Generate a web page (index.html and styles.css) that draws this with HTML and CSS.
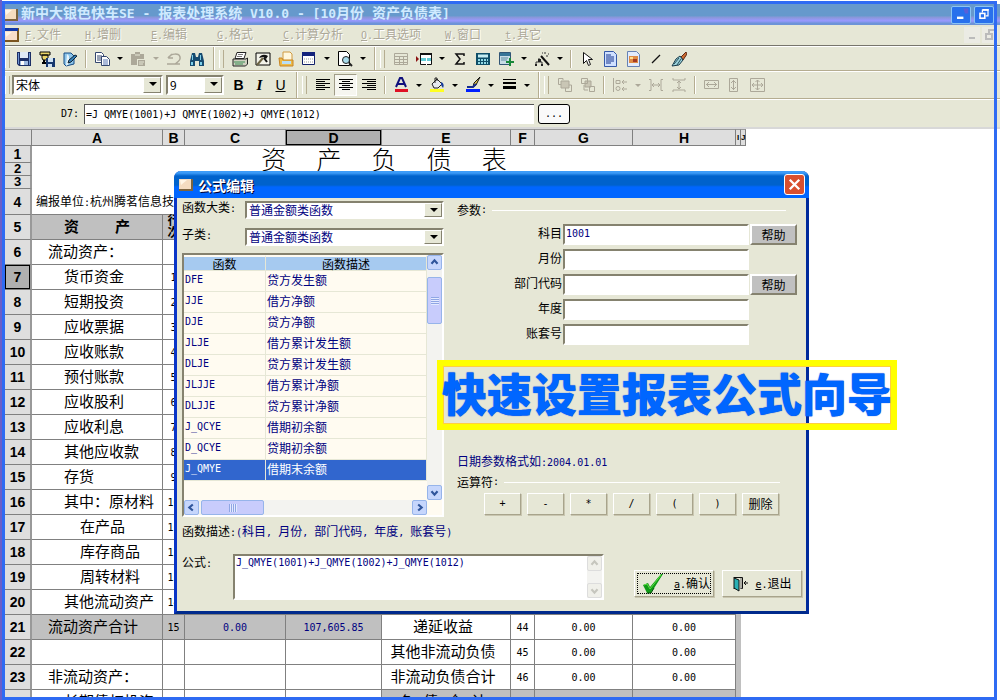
FILE: index.html
```html
<!DOCTYPE html>
<html lang="zh-CN">
<head>
<meta charset="utf-8">
<title>新中大银色快车SE - 报表处理系统</title>
<link rel="stylesheet" href="styles.css">
</head>
<body>
<div class="app">
  <header class="titlebar">
    <svg class="app-icon" viewBox="0 0 16 16"><rect x="1" y="2" width="14" height="12" fill="#7b6440"/><rect x="1" y="2" width="12" height="10" fill="#f4dcc0"/><path d="M2 3h7l-6 5z" fill="#fff6e6"/></svg>
    <h1>新中大银色快车<span class="l">SE - </span>报表处理系统<span class="l"> V10.0 - [10</span>月份<span class="l"> </span>资产负债表<span class="l">]</span></h1>
    <div class="win-buttons">
      <button class="win-btn" aria-label="最小化"><svg viewBox="0 0 20 20"><path d="M13 2h6v6h-4z" fill="#5a5fd8"/><rect x="5" y="12" width="8" height="3" fill="#fff"/></svg></button>
      <button class="win-btn" aria-label="还原"><svg viewBox="0 0 20 20" fill="none" stroke="#fff"><path d="M8 7V4h7v7h-3" stroke-width="1.5"/><path d="M8 3.500h8" stroke-width="2"/><rect x="5" y="8" width="6" height="6" stroke-width="2"/></svg></button>
    </div>
  </header>
  <nav class="menubar">
    <svg class="app-icon" viewBox="0 0 16 16"><rect x="0" y="1" width="15" height="14" fill="#7b5520"/><rect x="0" y="3" width="13" height="10" fill="#f8dccb"/><path d="M0 1h14v3H0z" fill="#1238a8"/><path d="M1 5h7l-6 5z" fill="#fff3e6"/></svg>
    <ul class="menus">
      <li><u class="l">F</u><span class="l">.</span>文件</li><li><u class="l">H</u><span class="l">.</span>增删</li><li><u class="l">E</u><span class="l">.</span>编辑</li><li><u class="l">G</u><span class="l">.</span>格式</li><li><u class="l">C</u><span class="l">.</span>计算分析</li><li><u class="l">O</u><span class="l">.</span>工具选项</li><li><u class="l">W</u><span class="l">.</span>窗口</li><li><u class="l">t</u><span class="l">.</span>其它</li>
    </ul>
    <div class="mdi-buttons">
      <svg viewBox="0 0 16 16"><rect x="5" y="10" width="6" height="2" fill="#bbb"/></svg>
      <svg viewBox="0 0 16 16" fill="none" stroke="#bbb" stroke-width="2"><path d="M7 6V3h7v6h-2M4 7h6v5H4z"/></svg>
    </div>
  </nav>

  <div class="toolbar">
    <div class="band">
      <button class="tool" aria-label="保存"><svg viewBox="0 0 16 16"><path d="M1 1h14v14H3l-2-2z" fill="#1c2f66"/><path d="M4 1h8v6H4z" fill="#dfe9f5"/><path d="M2 2h1v11H2zM13 2h1v12h-1z" fill="#6c93d0"/><path d="M4 10h8v4H4z" fill="#9db9e0"/><path d="M5 10h3v4H5z" fill="#fff"/></svg></button>
      <button class="tool" aria-label="另存"><svg viewBox="0 0 16 16"><path d="M1 1h10v3H1zM3 4h6v3l-1 2H4L3 7z" fill="#e8d46a" stroke="#000"/><path d="M3 12h5M5 9v3" stroke="#000" stroke-width="2"/><path d="M7 7h9v9H7z" fill="#17386f"/><path d="M9 7h5v4H9zM9 13h4v3H9z" fill="#cfe2f4"/></svg></button>
      <button class="tool" aria-label="属性"><svg viewBox="0 0 16 16"><path d="M2 2h7l3 3v8l-8 2-2-2z" fill="#8dc5ea" stroke="#174c84"/><path d="M5 3l2 2v8l-3 2z" fill="#e6f4fb"/><path d="M15 5l-6 6-3 1 1-3 6-5z" fill="#3482ba" stroke="#123"/></svg></button>
      <span class="sep"></span>
      <button class="tool" aria-label="复制"><svg viewBox="0 0 16 16" fill="#fff" stroke="#33466f"><path d="M1.500 1.500h6l2 2v8h-8z"/><path d="M3 5h5M3 7h5M3 9h5"/><path d="M7.500 5.500h5l3 3v6h-8z"/><path d="M9 9h5M9 11h5M9 13h5" stroke="#5575b5"/></svg></button>
      <button class="drop" aria-label="复制选项"></button>
      <button class="tool" aria-label="粘贴"><svg viewBox="0 0 16 16" fill="#aca899"><path d="M1 3h4V1h5v2h4v5H7v6H1z"/><path d="M8 9h7v6H8z"/><path d="M5 4h5M9 11h5M9 13h4" stroke="#e6e7d6"/></svg></button>
      <button class="drop off" aria-label="粘贴选项"></button>
      <button class="tool" aria-label="撤销"><svg viewBox="0 0 16 16" fill="none" stroke="#aca899" stroke-width="1.500"><path d="M2 7l4-4M2 7h5M2 7c3-5 11-5 12-1s-3 5-5 7M1 13h13"/></svg></button>
      <button class="tool" aria-label="查找"><svg viewBox="0 0 16 16"><path d="M3 2h3l1 4h2l1-4h3l2 8v5h-5v-5H6v5H1v-5z" fill="#174b70"/><path d="M3 4h1v5H3zM11 4h1v5h-1zM2 11h2v3H2zM11 11h2v3h-2z" fill="#7dd0ea"/></svg></button>
    </div>
    <div class="band">
      <button class="tool" aria-label="打印"><svg viewBox="0 0 16 16" stroke="#222"><path d="M5 1.500h9l-2 6H3z" fill="#fff"/><path d="M6 3.500h5M5 5.500h5" stroke="#777"/><path d="M1 8h13l1.500-1v6l-2 2H1z" fill="#cfcfc0"/><path d="M2 11h11M3 13h8" stroke="#3b8f55"/></svg></button>
      <button class="tool" aria-label="工具"><svg viewBox="0 0 16 16"><path d="M1 2h14v12H1z" fill="#f3f3ea" stroke="#000"/><path d="M4 7c2-4 6-4 9-2l-2 3-3-2z" fill="#111"/><path d="M8 7l-6 7" stroke="#6d6443" stroke-width="2"/><path d="M9 7l3 4" stroke="#111" stroke-width="2"/></svg></button>
      <button class="tool" aria-label="打开"><svg viewBox="0 0 16 16"><path d="M5 1h7l2 2v9H5z" fill="#fff8dd" stroke="#d09a40"/><path d="M1 7h3l1 2h10v6H2z" fill="#edba48" stroke="#c78625"/><path d="M4 10h9v3H4z" fill="#b8def5"/></svg></button>
      <button class="tool" aria-label="窗口"><svg viewBox="0 0 16 16"><path d="M1.500 1.500h12v12h-12z" fill="#fff" stroke="#12206a"/><path d="M1 1h13v4H1z" fill="#14237c"/><path d="M3 8h9M3 11h9" stroke="#999" stroke-dasharray="1 1"/></svg></button>
      <button class="drop" aria-label="窗口选项"></button>
      <button class="tool" aria-label="预览"><svg viewBox="0 0 16 16"><path d="M1.500 .5h8l3 3v11h-11z" fill="#fff" stroke="#000"/><circle cx="9" cy="9" r="3.500" fill="#a9dcec" stroke="#222"/><path d="M12 12l3 3" stroke="#222" stroke-width="2"/></svg></button>
      <button class="drop" aria-label="预览选项"></button>
    </div>
    <div class="band last">
      <button class="tool" aria-label="表格"><svg viewBox="0 0 16 16" fill="none" stroke="#aca899"><path d="M1.500 2.500h13v11h-13zM1 5.500h14M1 8.500h14M1 11.500h14M6.500 5v8M10.500 5v8"/></svg></button>
      <button class="tool" aria-label="插入"><svg viewBox="0 0 16 16"><path d="M0 5l3 3-3 3z" fill="#8b1212"/><path d="M4.500 2.500h11v11h-11z" fill="#fff" stroke="#111"/><path d="M4 2h12v2H4z" fill="#111"/><path d="M5 7h10v3H5z" fill="#62cbd5"/><path d="M10.500 4v10" stroke="#fff"/></svg></button>
      <button class="drop" aria-label="插入选项"></button>
      <button class="tool" aria-label="求和"><svg viewBox="0 0 16 16"><path d="M12 5V3H4l4 5-4 5h8v-2" fill="none" stroke="#111" stroke-width="1.500"/></svg></button>
      <button class="tool" aria-label="计算器"><svg viewBox="0 0 16 16"><path d="M1 2h14v12H1z" fill="#0f4e68"/><path d="M3 3.500h10v3H3z" fill="#c5edf2"/><path d="M3 9h10M3 12h10" stroke="#91dae6" stroke-width="2" stroke-dasharray="2 1"/></svg></button>
      <button class="tool" aria-label="增加表"><svg viewBox="0 0 16 16"><path d="M1.500 1.500h11v12h-11z" fill="#c8dce6" stroke="#315575"/><path d="M2 2h10v3H2z" fill="#377497"/><path d="M3 7h7M3 9h6" stroke="#5d8ba0"/><path d="M12 7v8M8 11h8" stroke="#18883a" stroke-width="2"/></svg></button>
      <button class="drop" aria-label="增加选项"></button>
      <button class="tool" aria-label="向导"><svg viewBox="0 0 16 16"><path d="M7 5l8 9" stroke="#111" stroke-width="2"/><path d="M11 1v2M14 3h1M8 2h1M12 5h2M5 7v3M2 14v-3h6v3" stroke="#333" fill="none"/><path d="M4 8h3v3H4zM1 13h2v2H1zM7 13h2v2H7z" fill="#222"/></svg></button>
      <button class="drop" aria-label="向导选项"></button>
      <span class="sep"></span>
      <button class="tool" aria-label="选择"><svg viewBox="0 0 16 16"><path d="M4.500 1.500v11l3-3 2 5 2-1-2-5h4z" fill="#fff" stroke="#111"/></svg></button>
      <button class="tool" aria-label="文本"><svg viewBox="0 0 16 16"><path d="M2.500 .5h9l3 3v12h-12z" fill="#cfe0ff" stroke="#3559a8"/><path d="M4 4h5M4 6h8M4 8h8M4 10h8M4 12h5" stroke="#17358c"/></svg></button>
      <button class="tool" aria-label="图片"><svg viewBox="0 0 16 16"><path d="M2.500 .5h9l3 3v12h-12z" fill="#e2ecfc" stroke="#6682b4"/><path d="M4 5h9v7H4z" fill="#df8c45"/><path d="M5 6h3v2H5z" fill="#ffe091"/><path d="M8 8h4v3H8z" fill="#a23a24"/></svg></button>
      <button class="tool" aria-label="直线"><svg viewBox="0 0 16 16"><path d="M4 12l8-8" stroke="#111" stroke-width="1.200"/></svg></button>
      <button class="tool" aria-label="刷子"><svg viewBox="0 0 16 16"><path d="M15 1l-5 5 2 3 4-6z" fill="#cc6c31" stroke="#5e2713"/><path d="M9 5l3 4-4 5-7 1 4-7z" fill="#9bd1da" stroke="#183a49"/><path d="M3 13l5-6M6 14l4-6" stroke="#27505c"/></svg></button>
    </div>
  </div>

  <div class="toolbar format">
    <div class="band">
      <span class="combo font-name"><select aria-label="字体"><option>宋体</option></select></span>
      <span class="combo font-size"><select aria-label="字号"><option>9</option></select></span>
      <button class="tool letter bold">B</button>
      <button class="tool letter italic">I</button>
      <button class="tool letter under">U</button>
    </div>
    <div class="band">
      <button class="tool" aria-label="左对齐"><svg viewBox="0 0 16 16" stroke="#000"><path d="M1 2.500h14M1 4.500h9M1 6.500h14M1 8.500h9M1 10.500h14M1 12.500h9"/></svg></button>
      <button class="tool pressed" aria-label="居中"><svg viewBox="0 0 16 16" stroke="#000"><path d="M1 2.500h14M4 4.500h8M1 6.500h14M4 8.500h8M1 10.500h14M4 12.500h8"/></svg></button>
      <button class="tool" aria-label="右对齐"><svg viewBox="0 0 16 16" stroke="#000"><path d="M1 2.500h14M6 4.500h9M1 6.500h14M6 8.500h9M1 10.500h14M6 12.500h9"/></svg></button>
      <span class="sep"></span>
      <button class="tool" aria-label="字色"><svg viewBox="0 0 16 16"><path d="M3 10l4-9h2l4 9M5 7h6" fill="none" stroke="#10107c" stroke-width="2"/><path d="M2 12h13v3H2z" fill="#df1024"/></svg></button>
      <button class="drop" aria-label="字色选项"></button>
      <button class="tool" aria-label="填充"><svg viewBox="0 0 16 16"><path d="M3 7l5-5 5 5-4 4H5z" fill="#e6e9ee" stroke="#222"/><path d="M6 6V1h2v3" fill="none" stroke="#222"/><path d="M12 5c3 1 3 4 2 6l-2-3z" fill="#173c9b"/><path d="M1 12h14v3H1z" fill="#ffff20"/></svg></button>
      <button class="drop" aria-label="填充选项"></button>
      <button class="tool" aria-label="线色"><svg viewBox="0 0 16 16"><path d="M15 0l-4 8-3 2 1-4z" fill="#e5c84b" stroke="#111"/><path d="M2 10h6l3-3" stroke="#172e8c" stroke-width="2" fill="none"/><path d="M1 12h14v3H1z" fill="#001fff"/></svg></button>
      <button class="drop" aria-label="线色选项"></button>
      <button class="tool" aria-label="线宽"><svg viewBox="0 0 16 16"><path d="M2 2h13v1H2zM2 5h13v2H2zM2 9h13v3H2z"/></svg></button>
      <button class="drop" aria-label="线宽选项"></button>
    </div>
    <div class="band last">
      <button class="tool" aria-label="上移一层"><svg viewBox="0 0 16 16" fill="none" stroke="#aca899"><path d="M4 4h8v7H4z" fill="#c9c6b5"/><path d="M6 3V1.500H1.500v6H4M12 8h2.500v6.500h-6V11"/></svg></button>
      <button class="tool" aria-label="下移一层"><svg viewBox="0 0 16 16" fill="none" stroke="#aca899"><path d="M5 4h6v6H5z" fill="#c9c6b5"/><path d="M1.500 1.500h6v5h-6zM9.500 9.500h5v5h-5zM4 8v5h4"/></svg></button>
      <span class="sep"></span>
      <button class="tool" aria-label="对齐"><svg viewBox="0 0 16 16" fill="none" stroke="#aca899"><path d="M1.500 1v14M4 3.500h4v3H4z"/><circle cx="6" cy="11.500" r="2"/><path d="M10 5h5M10 12h5M12 3l-2 2 2 2M12 10l-2 2 2 2"/></svg></button>
      <button class="drop off" aria-label="对齐选项"></button>
      <button class="tool" aria-label="水平间距"><svg viewBox="0 0 16 16" fill="none" stroke="#aca899"><path d="M1 2.500h2v11H1M15 2.500h-2v11h2M4 8h8M6 6L4 8l2 2M10 6l2 2-2 2"/></svg></button>
      <button class="tool" aria-label="垂直间距"><svg viewBox="0 0 16 16" fill="none" stroke="#aca899"><path d="M2 1v2h12V1M2 15v-2h12v2M8 4v8M6 6l2-2 2 2M6 10l2 2 2-2"/></svg></button>
      <span class="sep"></span>
      <button class="tool" aria-label="同宽"><svg viewBox="0 0 16 16" fill="none" stroke="#aca899"><path d="M1.500 3.500h14v8h-14zM3 7.500h11M6 5L3.500 7.500 6 10M11 5l2.500 2.500L11 10"/></svg></button>
      <button class="tool" aria-label="同高"><svg viewBox="0 0 16 16" fill="none" stroke="#aca899"><path d="M3.500 1.500h8v13h-8zM7.500 3v10M5 6l2.500-2.500L10 6M5 10l2.500 2.500L10 10"/></svg></button>
      <button class="tool" aria-label="同大小"><svg viewBox="0 0 16 16" fill="none" stroke="#aca899"><path d="M1.500 1.500h14v13h-14zM3 8h11M8.500 3v10M5 6L3 8l2 2M12 6l2 2-2 2M6.500 5l2-2 2 2M6.500 11l2 2 2-2"/></svg></button>
    </div>
  </div>

  <div class="formula-bar">
    <label for="cell-formula" class="l">D7:</label>
    <input id="cell-formula" class="l" value="=J_QMYE(1001)+J_QMYE(1002)+J_QMYE(1012)">
    <button class="l">...</button>
  </div>

  <main class="sheet">
    <table class="grid">
      <colgroup><col class="c-n"><col class="c-a"><col class="c-b"><col class="c-c"><col class="c-d"><col class="c-e"><col class="c-f"><col class="c-g"><col class="c-h"><col class="c-i"><col class="c-j"></colgroup>
      <thead><tr><th></th><th>A</th><th>B</th><th>C</th><th class="on">D</th><th>E</th><th>F</th><th>G</th><th>H</th><th class="thin">I</th><th class="thin">J</th></tr></thead>
      <tbody>
        <tr class="r1"><th>1</th><td colspan="8" rowspan="2" class="free sheet-title">资&nbsp;&nbsp;产&nbsp;&nbsp;负&nbsp;&nbsp;债&nbsp;&nbsp;表</td></tr>
        <tr class="r2"><th>2</th></tr>
        <tr class="r2"><th>3</th><td colspan="8" class="free"></td></tr>
        <tr class="r4"><th>4</th><td colspan="8" class="free company">编报单位<span class="l">:</span>杭州腾茗信息技</td></tr>
        <tr class="gray head"><th>5</th><td>资&nbsp;&nbsp;&nbsp;&nbsp;产</td><td class="wrap">行次</td><td></td><td></td><td></td><td></td><td></td><td></td><td class="edge"></td></tr>
        <tr><th>6</th><td class="i1">流动资产：</td><td></td><td></td><td></td><td></td><td></td><td></td><td></td><td class="edge"></td></tr>
        <tr><th class="on">7</th><td class="i2">货币资金</td><td>1</td><td></td><td></td><td></td><td></td><td></td><td></td><td class="edge"></td></tr>
        <tr><th>8</th><td class="i2">短期投资</td><td>2</td><td></td><td></td><td></td><td></td><td></td><td></td><td class="edge"></td></tr>
        <tr><th>9</th><td class="i2">应收票据</td><td>3</td><td></td><td></td><td></td><td></td><td></td><td></td><td class="edge"></td></tr>
        <tr><th>10</th><td class="i2">应收账款</td><td>4</td><td></td><td></td><td></td><td></td><td></td><td></td><td class="edge"></td></tr>
        <tr><th>11</th><td class="i2">预付账款</td><td>5</td><td></td><td></td><td></td><td></td><td></td><td></td><td class="edge"></td></tr>
        <tr><th>12</th><td class="i2">应收股利</td><td>6</td><td></td><td></td><td></td><td></td><td></td><td></td><td class="edge"></td></tr>
        <tr><th>13</th><td class="i2">应收利息</td><td>7</td><td></td><td></td><td></td><td></td><td></td><td></td><td class="edge"></td></tr>
        <tr><th>14</th><td class="i2">其他应收款</td><td>8</td><td></td><td></td><td></td><td></td><td></td><td></td><td class="edge"></td></tr>
        <tr><th>15</th><td class="i2">存货</td><td>9</td><td></td><td></td><td></td><td></td><td></td><td></td><td class="edge"></td></tr>
        <tr><th>16</th><td class="i2">其中：原材料</td><td>10</td><td></td><td></td><td></td><td></td><td></td><td></td><td class="edge"></td></tr>
        <tr><th>17</th><td class="i3">在产品</td><td>11</td><td></td><td></td><td></td><td></td><td></td><td></td><td class="edge"></td></tr>
        <tr><th>18</th><td class="i3">库存商品</td><td>12</td><td></td><td></td><td></td><td></td><td></td><td></td><td class="edge"></td></tr>
        <tr><th>19</th><td class="i3">周转材料</td><td>13</td><td></td><td></td><td></td><td></td><td></td><td></td><td class="edge"></td></tr>
        <tr><th>20</th><td class="i2">其他流动资产</td><td>14</td><td></td><td></td><td></td><td></td><td></td><td></td><td class="edge"></td></tr>
        <tr><th>21</th><td class="i1 g">流动资产合计</td><td class="g">15</td><td class="g num">0.00</td><td class="g num">107,605.85</td><td class="item">递延收益</td><td>44</td><td>0.00</td><td>0.00</td><td class="edge"></td></tr>
        <tr><th>22</th><td></td><td></td><td></td><td></td><td class="item">其他非流动负债</td><td>45</td><td>0.00</td><td>0.00</td><td class="edge"></td></tr>
        <tr><th>23</th><td class="i1">非流动资产：</td><td></td><td></td><td></td><td class="item">非流动负债合计</td><td>46</td><td>0.00</td><td>0.00</td><td class="edge"></td></tr>
        <tr><th>24</th><td class="i2">长期债权投资</td><td></td><td></td><td></td><td class="item g">负&nbsp;债&nbsp;合&nbsp;计</td><td class="g"></td><td class="g"></td><td class="g"></td><td class="edge"></td></tr>
      </tbody>
    </table>
  </main>

  <section class="dialog" role="dialog" aria-labelledby="dialog-title">
    <header class="dialog-title">
      <svg class="app-icon" viewBox="0 0 16 16"><rect x="1" y="2" width="14" height="12" fill="#7b6440"/><rect x="1" y="2" width="12" height="10" fill="#f4dcc0"/><path d="M2 3h7l-6 5z" fill="#fff6e6"/></svg>
      <h2 id="dialog-title">公式编辑</h2>
      <button class="close" aria-label="关闭"><svg viewBox="0 0 20 20"><path d="M5 5l10 10M15 5L5 15" stroke="#fff" stroke-width="2.500"/></svg></button>
    </header>
    <div class="dialog-body">
      <div class="columns">
        <div class="picker">
          <div class="pick-row"><label for="cat">函数大类<span class="l">:</span></label><span class="combo"><select id="cat"><option>普通金额类函数</option></select></span></div>
          <div class="pick-row second"><label for="sub">子类<span class="l">:</span></label><span class="combo"><select id="sub"><option>普通金额类函数</option></select></span></div>
          <div class="list">
            <table class="functions">
              <thead><tr><th class="code">函数</th><th>函数描述</th></tr></thead>
              <tbody>
                <tr><td class="l">DFE</td><td>贷方发生额</td></tr>
                <tr><td class="l">JJE</td><td>借方净额</td></tr>
                <tr><td class="l">DJE</td><td>贷方净额</td></tr>
                <tr><td class="l">JLJE</td><td>借方累计发生额</td></tr>
                <tr><td class="l">DLJE</td><td>贷方累计发生额</td></tr>
                <tr><td class="l">JLJJE</td><td>借方累计净额</td></tr>
                <tr><td class="l">DLJJE</td><td>贷方累计净额</td></tr>
                <tr><td class="l">J_QCYE</td><td>借期初余额</td></tr>
                <tr><td class="l">D_QCYE</td><td>贷期初余额</td></tr>
                <tr class="selected"><td class="l">J_QMYE</td><td>借期末余额</td></tr>
              </tbody>
            </table>
            <div class="vscroll">
              <svg class="arrow" viewBox="0 0 15 15"><path d="M4 9l3.500-4L11 9" /></svg>
              <span class="thumb"></span>
              <svg class="arrow" viewBox="0 0 15 15"><path d="M4 6l3.500 4L11 6"/></svg>
            </div>
            <div class="hscroll">
              <svg class="arrow" viewBox="0 0 15 15"><path d="M9 4L5 7.500 9 11"/></svg>
              <span class="thumb"></span>
              <svg class="arrow" viewBox="0 0 15 15"><path d="M6 4l4 3.500L6 11"/></svg>
            </div>
          </div>
        </div>
        <div class="params">
          <h3>参数<span class="l">:</span></h3>
          <div class="fields">
            <label for="p1">科目</label><input id="p1" class="l" value="1001"><button class="help">帮助</button>
            <label for="p2">月份</label><input id="p2" class="l"><span></span>
            <label for="p3">部门代码</label><input id="p3" class="l"><button class="help">帮助</button>
            <label for="p4">年度</label><input id="p4" class="l"><span></span>
            <label for="p5">账套号</label><input id="p5" class="l"><span></span>
          </div>
          <p class="date-note">日期参数格式如<span class="l">:2004.01.01</span></p>
          <h3 class="ops-head">运算符<span class="l">:</span></h3>
          <div class="ops"><button class="l">+</button><button class="l">-</button><button class="l">*</button><button class="l">/</button><button class="l">(</button><button class="l">)</button><button>删除</button></div>
        </div>
      </div>
      <p class="describe">函数描述<span class="l">:</span><span class="blue"><span class="l">(</span>科目<span class="l">, </span>月份<span class="l">, </span>部门代码<span class="l">, </span>年度<span class="l">, </span>账套号<span class="l">)</span></span></p>
      <div class="formula-row">
        <label for="formula">公式<span class="l">:</span></label>
        <div class="memo">
          <textarea id="formula" class="l">J_QMYE(1001)+J_QMYE(1002)+J_QMYE(1012)</textarea>
          <div class="vscroll idle">
            <svg class="arrow" viewBox="0 0 15 15"><path d="M4 9l3.500-4L11 9"/></svg>
            <svg class="arrow" viewBox="0 0 15 15"><path d="M4 6l3.500 4L11 6"/></svg>
          </div>
        </div>
        <div class="actions">
          <button class="default"><span class="focus"><svg class="check" viewBox="0 0 22 22"><path d="M1 12l5-2 2 4L19 1h2L9 20H5z" fill="#109a16"/><path d="M2 12l3-1 3 5L19 2" fill="none" stroke="#5ede42"/><path d="M5 20h4l3-5" fill="none" stroke="#07500a"/></svg><span><u class="l">a</u><span class="l">.</span>确认</span></span></button>
          <button><svg class="exit" viewBox="0 0 16 16"><path d="M1.500 1.500h9v11h-2M1.500 12.500h2" fill="none" stroke="#111"/><path d="M2 2l5 2v11l-5-3z" fill="#29b0b5" stroke="#111"/><path d="M9 2v11" stroke="#777"/><path d="M16 7h-4M14 5l-2 2 2 2" stroke="#111" fill="none"/></svg><span><u class="l">e</u><span class="l">.</span>退出</span></button>
        </div>
      </div>
    </div>
  </section>

  <div class="callout">快速设置报表公式向导</div>
</div>
</body>
</html>
```

FILE: styles.css
```css
* { box-sizing: border-box; }

body {
  margin: 0;
  font: 12px/14px "Noto Sans CJK SC", sans-serif;
  color: #000;
  background: #fff;
}

h1, h2, h3, p, ul { margin: 0; padding: 0; font-size: 12px; font-weight: 400; }
ul { list-style: none; }

button, input, select, textarea {
  margin: 0;
  padding: 0;
  border: 0;
  border-radius: 0;
  font: inherit;
  color: inherit;
  background: none;
  appearance: none;
  outline: 0;
}

/* half-width characters */
.l { font-family: "DejaVu Sans Mono", monospace; font-size: 10px; white-space: pre; }

.app {
  position: relative;
  display: flex;
  flex-direction: column;
  height: 100vh;
  padding: 4px 0 0 5px;
  overflow: hidden;
  background: linear-gradient(90deg, #6a5fc8 0 2px, #fff 2px);
}
.app::after {
  content: "";
  position: absolute;
  inset: 1px 3px 0 2px;
  border: 3px solid #2f6bf3;
  pointer-events: none;
}

.app-icon { flex: none; width: 16px; height: 16px; }

.titlebar {
  display: flex;
  align-items: center;
  flex: none;
  height: 21px;
  padding-right: 6px;
  background: linear-gradient(#6699cc 0 55%, #8c97dc 65%, #9999ff 80%, #6d93d8 92%);
}
.titlebar .app-icon { margin-left: -2px; margin-right: 2px; }
.titlebar h1 { flex: 1; padding-bottom: 4px; font-size: 14px; font-weight: 700; color: #cfeaff; white-space: nowrap; }
.titlebar h1 .l { font-size: 13px; }
.win-buttons { display: flex; gap: 3px; }
.win-btn {
  width: 20px;
  height: 18px;
  border: 1px solid #8ac4f4;
  border-radius: 2px;
  background: #2870ec;
}
.win-btn svg { display: block; width: 18px; height: 16px; }

.menubar {
  display: flex;
  align-items: center;
  flex: none;
  height: 21px;
  padding-right: 2px;
  background: #e6e7d6;
  border-bottom: 1px solid #77756c;
}
.menubar .app-icon { margin-left: -1px; margin-right: 5px; }
.menus {
  flex: 1;
  display: grid;
  grid-template-columns: 60px 66px 66px 66px 78px 84px 60px auto;
  color: #aca899;
  text-shadow: 1px 1px #fff;
  white-space: nowrap;
}
.mdi-buttons { display: flex; gap: 2px; }
.mdi-buttons svg { width: 16px; height: 16px; background: #ebebe4; }

.toolbar {
  display: flex;
  flex: none;
  height: 25px;
  background: #e6e7d6;
  border-top: 1px solid #fff;
  border-bottom: 1px solid #b5ad91;
}
.toolbar.format { height: 28px; }
.band {
  display: flex;
  align-items: center;
  padding: 0 5px;
  border-right: 1px solid #b5ad91;
  box-shadow: 1px 0 #fff;
}
.band::before {
  content: "";
  width: 3px;
  height: 18px;
  margin-right: 4px;
  border-right: 1px solid #b5ad91;
  border-left: 1px solid #fff;
}
.band:first-child { padding-left: 0; }
.band:first-child::before { margin-right: 2px; }
.band.last { flex: 1; border: 0; }
.tool { flex: none; width: 23px; height: 22px; display: grid; place-items: center; }
.tool svg { width: 16px; height: 16px; }
.tool.pressed {
  background: #f6f6f0;
  border: 1px solid;
  border-color: #a09c88 #fff #fff #a09c88;
}
.drop { flex: none; width: 13px; height: 22px; display: grid; place-items: center; }
.drop::before, .combo::after {
  content: "";
  border: 3px solid transparent;
  border-top-color: #000;
  border-bottom: 0;
}
.drop.off::before { border-top-color: #aca899; }
.sep { width: 1px; height: 18px; margin: 0 4px; background: #b5ad91; box-shadow: 1px 0 #fff; }
.letter { width: 21px; font: 700 14px/16px "Liberation Sans", sans-serif; }
.letter.italic { font-style: italic; font-family: "Liberation Serif", serif; font-size: 15px; }
.letter.under { font-weight: 400; text-decoration: underline; }

.combo {
  position: relative;
  display: block;
  height: 18px;
  border: 2px solid;
  border-color: #85826f #fff #fff #85826f;
  background: #fff;
}
.combo select {
  display: block;
  width: 100%;
  height: 100%;
  padding: 0 18px 0 2px;
  line-height: 14px;
}
.combo::before {
  content: "";
  position: absolute;
  inset: 0 0 0 auto;
  width: 16px;
  background: #e6e7d6;
  border: 1px solid;
  border-color: #fff #85826f #85826f #fff;
  pointer-events: none;
}
.combo::after {
  position: absolute;
  right: 4px;
  top: 5px;
  border-width: 4px;
  border-bottom: 0;
  pointer-events: none;
}
.format .combo { height: 20px; }
.font-name { width: 151px; margin-right: 3px; }
.font-size { width: 58px; margin-right: 4px; }

.formula-bar {
  display: flex;
  align-items: center;
  flex: none;
  height: 30px;
  background: #e6e7d6;
  border-top: 1px solid #fff;
  border-bottom: 2px solid #d8d8d8;
}
.formula-bar label { width: 79px; padding-right: 5px; text-align: right; }
.formula-bar input {
  width: 450px;
  height: 20px;
  padding: 0 1px;
  line-height: 18px;
  background: #fff;
  border-top: 1px solid #555;
  border-left: 1px solid #555;
}
.formula-bar button {
  width: 32px;
  height: 20px;
  margin-left: 4px;
  border: 1px solid #000;
  border-radius: 3px;
  background: #fafafa;
}

.sheet { flex: 1; min-height: 0; overflow: hidden; }
.grid {
  width: 741px;
  table-layout: fixed;
  border-collapse: separate;
  border-spacing: 0;
}
.c-n { width: 27px; } .c-a { width: 131px; } .c-b { width: 22px; } .c-c { width: 101px; }
.c-d { width: 96px; } .c-e { width: 129px; } .c-f { width: 24px; } .c-g { width: 98px; }
.c-h { width: 103px; } .c-i { width: 5px; } .c-j { width: 5px; }
.grid th, .grid td { padding: 0; white-space: nowrap; }
.grid th {
  font: 700 14px/14px "Liberation Sans", sans-serif;
  background: #dedede;
  border-right: 1px solid #808080;
  border-bottom: 1px solid #808080;
}
.grid thead th { height: 17px; border-top: 1px solid #999; }
.grid thead .thin { font-size: 8px; }
.grid tbody th { border-right: 2px solid #999; }
.grid .on { background: #b0b0b0; box-shadow: inset 0 0 0 1px #000; }
.grid tbody tr { height: 25px; }
.grid tbody .r1 { height: 17px; }
.grid tbody .r2 { height: 13px; }
.grid .r2 th { font-size: 13px; line-height: 12px; }
.grid tbody .r4 { height: 26px; }
.grid td {
  font: 10px/15px "DejaVu Sans Mono", "Noto Sans CJK SC", sans-serif;
  text-align: center;
  border-right: 1px solid #808080;
  border-bottom: 1px solid #808080;
}
.grid td.free { border-right: 0; border-bottom: 0; }
.grid .r4 td.free { border-bottom: 1px solid #808080; }
.grid td.sheet-title { font-size: 25px; line-height: 28px; font-weight: 300; }
.grid td.company { text-align: left; padding-left: 4px; font-family: "Noto Sans CJK SC", sans-serif; font-size: 12px; }
.grid .i1, .grid .i2, .grid .i3 { text-align: left; font-size: 15px; line-height: 20px; }
.grid .i1 { padding-left: 16px; }
.grid .i2 { padding-left: 32px; }
.grid .i3 { padding-left: 48px; }
.grid .item { font-size: 15px; line-height: 20px; padding-right: 6px; }
.grid .head td { font-size: 15px; line-height: 20px; font-weight: 700; }
.grid .head .wrap { font-size: 12px; line-height: 12px; white-space: normal; padding: 0 4px; }
.grid .gray td, .grid td.g, .grid td.edge { background: #c0c0c0; }
.grid td.num { color: #000080; }
.grid td.edge { border: 0; }

.dialog {
  position: absolute;
  left: 174px;
  top: 171px;
  width: 635px;
  border: 3px solid #0a35c8;
  border-top: 0;
  border-right-color: #002a9c;
  border-bottom-color: #002a8c;
  border-radius: 7px 7px 0 0;
  background: #e6e7d6;
}
.dialog-title {
  display: flex;
  align-items: center;
  height: 27px;
  margin: 0 -3px;
  padding: 0 4px;
  border-radius: 7px 7px 0 0;
  background: linear-gradient(#3c9bf8 0 2px, #0062cc 5px 14px, #0066ff 16px);
}
.dialog-title h2 { flex: 1; padding-left: 4px; font-size: 14px; font-weight: 700; color: #fff; text-shadow: 1px 1px #003; }
.close { width: 21px; height: 21px; border: 1px solid #fff; border-radius: 3px; background: #d9502f; }
.close svg { display: block; width: 19px; height: 19px; }

.dialog-body { padding: 3px 4px 11px 5px; }
.columns { display: grid; grid-template-columns: 262px 1fr; gap: 13px; }
.pick-row { display: grid; grid-template-columns: 63px 1fr; margin-bottom: 9px; color: #000080; }
.pick-row.second { margin-bottom: 7px; }
.pick-row label { color: #000; line-height: 12px; }

.list {
  display: grid;
  grid-template-columns: 1fr 15px;
  grid-template-rows: 1fr 15px;
  height: 264px;
  border: 2px solid;
  border-color: #85826f #fff #fff #85826f;
  background: #fffbf1;
}
.functions {
  align-self: start;
  width: 100%;
  border-collapse: separate;
  border-spacing: 0;
  color: #000080;
}
.functions th, .functions td { padding: 0 1px; text-align: left; border-right: 1px solid #e6e7d6; border-bottom: 1px solid #e6e7d6; }
.functions th {
  height: 16px;
  font-weight: 400;
  text-align: center;
  color: #000;
  line-height: 12px;
  background: #a6caf0;
  border-top: 2px solid #fffbf1;
}
.functions .code { width: 82px; }
.functions td { height: 21px; line-height: 14px; padding-bottom: 2px; }
.functions .selected td { background: #3166ce; color: #fff; }

.vscroll, .hscroll { display: flex; background: #f3f3f0; }
.vscroll { flex-direction: column; }
.hscroll .arrow:last-child { margin-left: auto; }
.vscroll .arrow:last-child { margin-top: auto; }
.arrow {
  flex: none;
  width: 15px;
  height: 15px;
  border: 1px solid #96b4ea;
  border-radius: 2px;
  background: #c6d6fc;
  fill: none;
  stroke: #2f559b;
  stroke-width: 2.5;
}
.thumb {
  display: grid;
  place-items: center;
  border: 1px solid #96b4ea;
  border-radius: 2px;
  background: #c8ccfc;
}
.thumb::before { content: ""; width: 8px; height: 8px; background: repeating-linear-gradient(#8fa6e4 0 1px, #e4eaff 1px 2px); }
.vscroll .thumb { height: 47px; margin-top: 7px; }
.hscroll .thumb { width: 63px; margin-left: 2px; }
.hscroll .thumb::before { background: repeating-linear-gradient(90deg, #8fa6e4 0 1px, #e4eaff 1px 2px); }
.idle .arrow { border-color: #ddd; background: #f0f0ea; stroke: #c6c6be; }

.params { display: flex; flex-direction: column; }
.params h3 { display: flex; align-items: center; margin: 2px 16px 7px 0; }
.params h3::after { content: ""; flex: 1; height: 1px; margin-left: 5px; background: #fff; }
.fields {
  display: grid;
  grid-template-columns: 105px 186px 47px;
  gap: 4px 1px;
}
.fields label { text-align: right; line-height: 17px; }
.fields input {
  height: 21px;
  padding: 0 1px 2px;
  color: #000080;
  background: #fff;
  border: 2px solid;
  border-color: #85826f #fff #fff #85826f;
}
.help {
  height: 21px;
  background: #c0c0c0;
  border: 2px solid;
  border-color: #fff #85826f #85826f #fff;
  line-height: 14px;
}
.date-note { margin-top: auto; color: #000080; }
.params h3.ops-head { margin: 5px 22px 4px 0; }
.ops { display: flex; gap: 6px; padding: 0 0 2px 27px; }
.ops button, .actions button {
  width: 37px;
  height: 22px;
  border: 1px solid;
  border-color: #fff #a8a48c #a8a48c #fff;
  box-shadow: 1px 1px #c9c6b0;
}

.describe { margin-top: 7px; white-space: nowrap; }
.blue { color: #000080; }
.formula-row { display: flex; align-items: flex-start; margin-top: 14px; }
.formula-row label { width: 51px; line-height: 16px; }
.memo {
  flex: 1;
  display: flex;
  height: 46px;
  border: 2px solid;
  border-color: #85826f #fff #fff #85826f;
  background: #fff;
}
.memo textarea { flex: 1; padding: 0 1px; color: #000080; resize: none; line-height: 14px; overflow: hidden; }
.actions { display: flex; gap: 8px; margin: 16px 0 0 30px; }
.actions button { width: 80px; height: 27px; display: flex; align-items: center; justify-content: space-around; padding: 0 6px; }
.actions button.default { padding: 2px; }
.focus {
  flex: 1;
  height: 21px;
  display: flex;
  align-items: center;
  justify-content: space-between;
  padding-left: 4px;
  border: 1px dotted #000;
}
.check { width: 22px; height: 22px; }
.exit { width: 16px; height: 16px; }

.callout {
  position: absolute;
  left: 437px;
  top: 360px;
  display: flex;
  align-items: center;
  justify-content: center;
  width: 460px;
  height: 70px;
  padding-bottom: 4px;
  border: 6px solid #ffff00;
  box-shadow: inset 0 0 0 1px #ffcf40;
  font-size: 45px;
  line-height: 54px;
  font-weight: 900;
  color: #0066ff;
  text-shadow: 0 0 1px #0033cc;
  white-space: nowrap;
}
```
